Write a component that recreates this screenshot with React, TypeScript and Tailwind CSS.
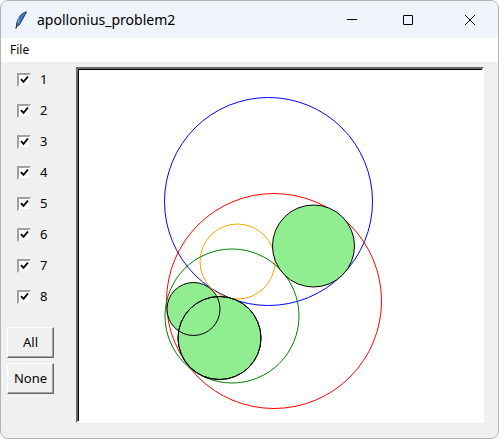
import { useState } from 'react'

const font = { fontFamily: '"Noto Sans", "Liberation Sans", sans-serif' }
const tkFont = { fontFamily: '"Noto Sans", "DejaVu Sans", sans-serif' }

function Feather() {
  return (
    <svg width="14" height="18" viewBox="0 0 14 18">
      <path d="M12.5 0.8 C7.5 2 3 7 2.5 14.5 L5 14.3 C7.5 9.5 10.5 5.5 12.5 0.8 Z" fill="#4176c8" stroke="#1b3666" strokeWidth="1" />
      <path d="M5 5.5 L4 12" stroke="#9cc0f0" strokeWidth="0.8" />
      <path d="M3 14.6 L1.8 17.6" stroke="#222" strokeWidth="1.3" />
    </svg>
  )
}

function Check({ label, checked, onToggle }: { label: string; checked: boolean; onToggle: () => void }) {
  return (
    <div className="flex items-center h-[31px] pl-[16px] gap-[9px] cursor-pointer" onClick={onToggle}>
      <div className="w-[14px] h-[14px] bg-white border-2 border-t-[#a0a0a0] border-l-[#a0a0a0] border-b-[#f0f0f0] border-r-[#f0f0f0] flex items-center justify-center">
        {checked && (
          <svg width="9" height="9" viewBox="0 0 9 9">
            <path d="M1 4.2 L3.5 6.8 L8 1.5" fill="none" stroke="#000" strokeWidth="1.9" />
          </svg>
        )}
      </div>
      <span className="text-[13px] text-black" style={tkFont}>{label}</span>
    </div>
  )
}

function TkButton({ children, onClick }: { children: string; onClick: () => void }) {
  return (
    <button
      onClick={onClick}
      className="w-[47px] h-[31px] bg-[#f0f0f0] border border-t-white border-l-white border-b-[#696969] border-r-[#696969] shadow-[inset_-1px_-1px_0_#a0a0a0] text-[13px] text-black flex items-center justify-center"
      style={tkFont}
    >
      {children}
    </button>
  )
}

const outlines = [
  { id: 1, cx: 268.5, cy: 201.5, r: 104, stroke: '#0000ff' },
  { id: 2, cx: 274, cy: 301, r: 107.5, stroke: '#ff0000' },
  { id: 3, cx: 237.5, cy: 261.5, r: 37.5, stroke: '#ffa500' },
  { id: 4, cx: 232, cy: 316, r: 67, stroke: '#008000' },
]

const solutions = [
  { id: 5, cx: 313.5, cy: 246, r: 41 },
  { id: 6, cx: 219.5, cy: 338, r: 41.5 },
  { id: 7, cx: 193.5, cy: 309, r: 26.5 },
  { id: 8, cx: 219.5, cy: 338, r: 41.5 },
]

export default function App() {
  const [shown, setShown] = useState<boolean[]>(Array(8).fill(true))

  const toggle = (i: number) => setShown(s => s.map((v, j) => (j === i ? !v : v)))

  return (
    <div className="w-[500px] h-[440px] bg-white">
      <div className="w-[499px] h-[439px] rounded-lg border border-[#b4b4b4] overflow-hidden flex flex-col bg-[#f0f0f0]">
        {/* Title bar */}
        <div className="h-[37px] bg-[#eff3fa] flex items-center shrink-0" style={font}>
          <div className="w-[36px] flex justify-center pl-[3px]">
            <Feather />
          </div>
          <span className="text-[14px] text-black">apollonius_problem2</span>
          <div className="ml-auto flex h-full">
            <div className="w-[46px] flex items-center justify-center">
              <div className="w-[10px] h-px bg-black" />
            </div>
            <div className="w-[66px] flex items-center justify-center">
              <div className="w-[10px] h-[10px] border border-black rounded-[1px]" />
            </div>
            <div className="w-[57px] flex items-center justify-center">
              <svg width="12" height="12" viewBox="0 0 12 12">
                <path d="M1 1 L11 11 M11 1 L1 11" stroke="#000" strokeWidth="1" />
              </svg>
            </div>
          </div>
        </div>

        {/* Menu */}
        <div className="h-[24px] bg-white flex items-center px-[9px] shrink-0" style={font}>
          <span className="text-[12px] text-black">File</span>
        </div>

        {/* Body */}
        <div className="flex flex-1 pt-[5px]">
          <div className="w-[75px] flex flex-col -mt-[3px]">
            {shown.map((v, i) => (
              <Check key={i} label={String(i + 1)} checked={v} onToggle={() => toggle(i)} />
            ))}
            <div className="flex flex-col gap-[5px] pl-[6px] pt-[15px]">
              <TkButton onClick={() => setShown(Array(8).fill(true))}>All</TkButton>
              <TkButton onClick={() => setShown(Array(8).fill(false))}>None</TkButton>
            </div>
          </div>

          <div className="w-[408px] h-[356px] border-2 border-t-[#696969] border-l-[#696969] border-b-white border-r-white shadow-[inset_1px_1px_0_#000] bg-white">
            <svg width="404" height="352" viewBox="78 69 404 352">
              {outlines.map(c =>
                shown[c.id - 1] ? (
                  <circle key={c.id} cx={c.cx} cy={c.cy} r={c.r} fill="none" stroke={c.stroke} strokeWidth="1" />
                ) : null
              )}
              {solutions.map(c =>
                shown[c.id - 1] ? <circle key={c.id} cx={c.cx} cy={c.cy} r={c.r} fill="#90ee90" /> : null
              )}
              {solutions.map(c =>
                shown[c.id - 1] ? (
                  <circle key={'o' + c.id} cx={c.cx} cy={c.cy} r={c.r} fill="none" stroke="#000" strokeWidth="1" />
                ) : null
              )}
            </svg>
          </div>
        </div>
      </div>
    </div>
  )
}
